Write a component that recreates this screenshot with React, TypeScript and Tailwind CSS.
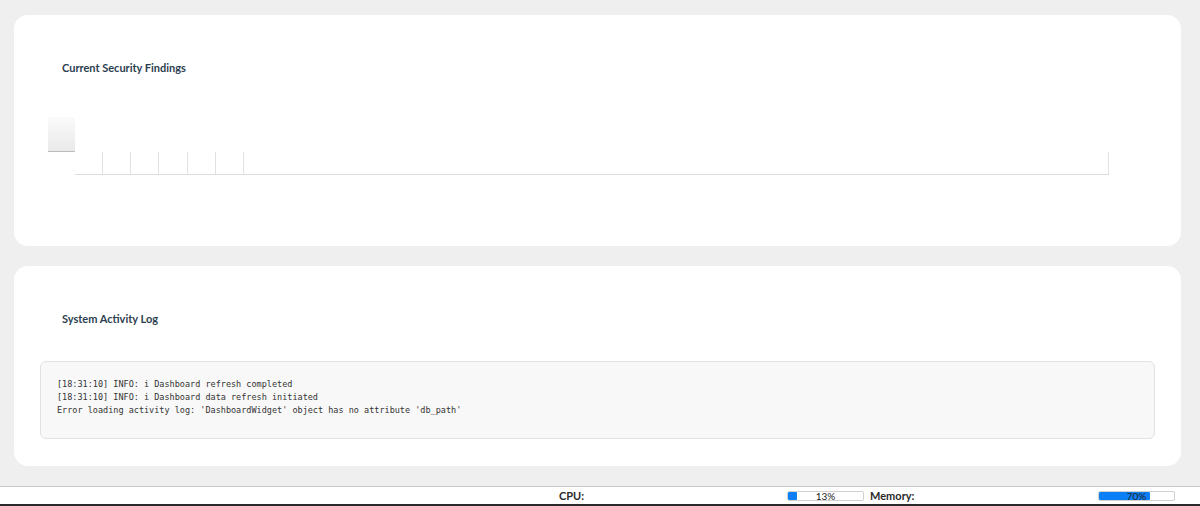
import React from "react";

const ticks = [102, 130, 158, 187, 215, 243];

function Chart() {
  // svg origin at page x=40, y=115
  return (
    <svg width="1080" height="66" className="block">
      <defs>
        <linearGradient id="g" x1="0" y1="0" x2="0" y2="1">
          <stop offset="0" stopColor="#fafafa" />
          <stop offset="1" stopColor="#e9e9e9" />
        </linearGradient>
      </defs>
      <rect x="8" y="3" width="27" height="35" fill="url(#g)" />
      <line x1="8" y1="37.5" x2="35" y2="37.5" stroke="#bdbdbd" strokeWidth="1" />
      {ticks.map((t) => (
        <line key={t} x1={t - 40 + 0.5} y1="38" x2={t - 40 + 0.5} y2="60" stroke="#e2e2e2" strokeWidth="1" />
      ))}
      <line x1={1108 - 40 + 0.5} y1="38" x2={1108 - 40 + 0.5} y2="60" stroke="#e2e2e2" strokeWidth="1" />
      <line x1="35" y1="60.5" x2={1108 - 40 + 1} y2="60.5" stroke="#dcdcdc" strokeWidth="1" />
    </svg>
  );
}

function Bar({ pct, label }: { pct: number; label: string }) {
  return (
    <div className="relative w-[77px] h-[10px] bg-white border border-[#d0d0d0] rounded-[2px] overflow-hidden">
      <div className="absolute left-0 top-0 bottom-0 bg-[#0b7ff5] rounded-[1px]" style={{ width: `${pct}%` }} />
      <div className="absolute inset-0 flex items-center justify-center text-[10px] leading-none text-[#222]" style={{ fontFamily: "Lato, 'Liberation Sans', sans-serif" }}>
        {label}
      </div>
    </div>
  );
}

export default function App() {
  return (
    <div className="w-[1200px] h-[506px] bg-[#efefef] flex flex-col overflow-hidden" style={{ fontFamily: "Lato, 'Noto Sans', sans-serif" }}>
      <div className="flex-1 flex flex-col pt-[15px] pl-[14px] pr-[19px] gap-[20px]">
        <div className="h-[231px] bg-white rounded-[14px] flex flex-col pl-[26px]">
          <div className="pt-[45px] pl-[22px] text-[11px] font-bold text-[#2c3e50] leading-[16px]">Current Security Findings</div>
          <div className="mt-[38px]">
            <Chart />
          </div>
        </div>
        <div className="h-[200px] bg-white rounded-[14px] flex flex-col px-[26px]">
          <div className="pt-[45px] pl-[22px] text-[11px] font-bold text-[#2c3e50] leading-[16px]">System Activity Log</div>
          <div className="mt-[34px] h-[78px] bg-[#f8f8f8] border border-[#e2e2e2] rounded-[6px] pl-[16px] pt-[16px] text-[8.5px] leading-[13px] text-[#333] whitespace-pre" style={{ fontFamily: "'DejaVu Sans Mono', monospace" }}>
            <div>[18:31:10] INFO: i Dashboard refresh completed</div>
            <div>[18:31:10] INFO: i Dashboard data refresh initiated</div>
            <div>Error loading activity log: 'DashboardWidget' object has no attribute 'db_path'</div>
          </div>
        </div>
      </div>
      <div className="h-[20px] bg-white border-t border-[#c9c9c9] border-b-2 border-b-[#2a2a2a] flex items-center">
        <div className="flex-1" />
        <div className="w-[228px] text-[11px] font-bold text-[#2a2a2a] leading-none">CPU:</div>
        <Bar pct={12} label="13%" />
        <div className="w-[6px]" />
        <div className="w-[228px] text-[11px] font-bold text-[#2a2a2a] leading-none">Memory:</div>
        <Bar pct={68} label="70%" />
        <div className="w-[25px]" />
      </div>
    </div>
  );
}
